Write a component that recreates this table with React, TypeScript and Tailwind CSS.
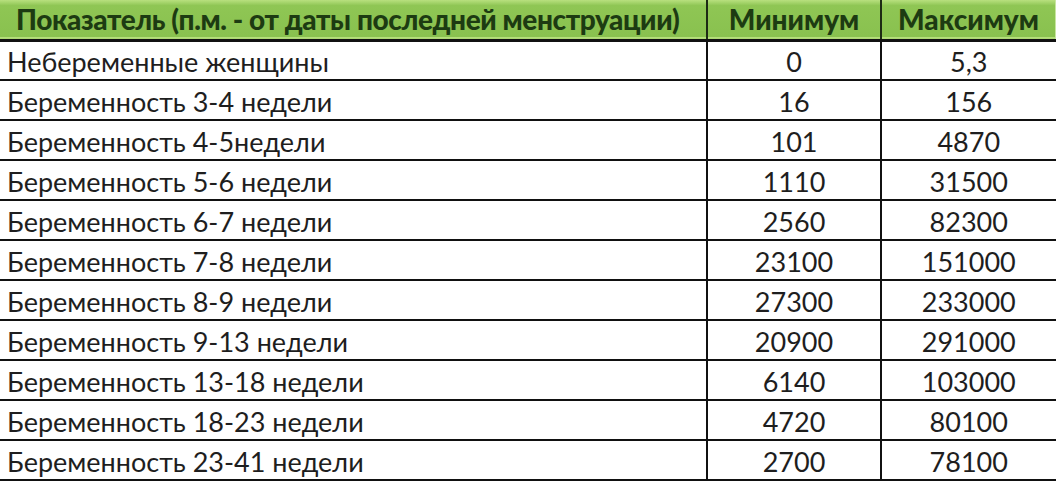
const rows: [string, string, string][] = [
  ["Небеременные женщины", "0", "5,3"],
  ["Беременность 3-4 недели", "16", "156"],
  ["Беременность 4-5недели", "101", "4870"],
  ["Беременность 5-6 недели", "1110", "31500"],
  ["Беременность 6-7 недели", "2560", "82300"],
  ["Беременность 7-8 недели", "23100", "151000"],
  ["Беременность 8-9 недели", "27300", "233000"],
  ["Беременность 9-13 недели", "20900", "291000"],
  ["Беременность 13-18 недели", "6140", "103000"],
  ["Беременность 18-23 недели", "4720", "80100"],
  ["Беременность 23-41 недели", "2700", "78100"],
];

export default function App() {
  return (
    <div className="w-[1056px] h-[482px] bg-white overflow-hidden font-['Lato','Open_Sans',sans-serif] text-[#1e1e1e]">
      <table className="w-full border-collapse table-fixed">
        <colgroup>
          <col className="w-[707px]" />
          <col className="w-[174px]" />
          <col />
        </colgroup>
        <thead>
          <tr className="h-[40px] bg-gradient-to-b from-[#b8e07e] from-0% via-[#8fc654] via-15% to-[#89c14f] border-b-[3px] border-[#111]">
            <th className="text-left pl-[16px] text-[28px] leading-none font-black text-[#1d3b12] tracking-[-0.4px] whitespace-nowrap border-r-2 border-[#1d2a14]">
              Показатель (п.м. - от даты последней менструации)
            </th>
            <th className="text-center text-[28px] leading-none font-black text-[#1d3b12] border-r-2 border-[#1d2a14]">
              Минимум
            </th>
            <th className="text-center text-[28px] leading-none font-black text-[#1d3b12] border-r border-[#c8e6a0]">
              Максимум
            </th>
          </tr>
        </thead>
        <tbody>
          {rows.map(([name, min, max]) => (
            <tr key={name} className="h-[40px] border-b-2 border-[#111]">
              <td className="pl-[7px] pt-[3px] text-[27px] leading-none border-r-2 border-[#111]">{name}</td>
              <td className="text-center pt-[3px] text-[27px] leading-none border-r-2 border-[#111]">{min}</td>
              <td className="text-center pt-[3px] text-[27px] leading-none">{max}</td>
            </tr>
          ))}
        </tbody>
      </table>
    </div>
  );
}
